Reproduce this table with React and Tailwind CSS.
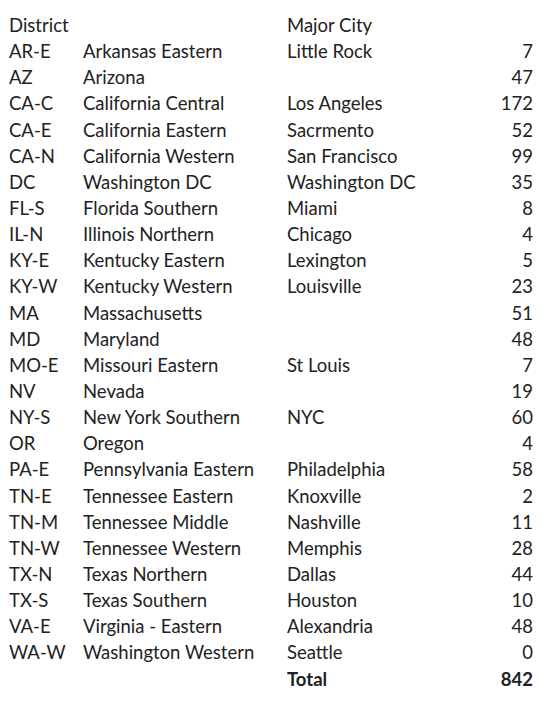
import React from "react";

const rows = [
  ["AR-E", "Arkansas Eastern", "Little Rock", "7"],
  ["AZ", "Arizona", "", "47"],
  ["CA-C", "California Central", "Los Angeles", "172"],
  ["CA-E", "California Eastern", "Sacrmento", "52"],
  ["CA-N", "California Western", "San Francisco", "99"],
  ["DC", "Washington DC", "Washington DC", "35"],
  ["FL-S", "Florida Southern", "Miami", "8"],
  ["IL-N", "Illinois Northern", "Chicago", "4"],
  ["KY-E", "Kentucky Eastern", "Lexington", "5"],
  ["KY-W", "Kentucky Western", "Louisville", "23"],
  ["MA", "Massachusetts", "", "51"],
  ["MD", "Maryland", "", "48"],
  ["MO-E", "Missouri Eastern", "St Louis", "7"],
  ["NV", "Nevada", "", "19"],
  ["NY-S", "New York Southern", "NYC", "60"],
  ["OR", "Oregon", "", "4"],
  ["PA-E", "Pennsylvania Eastern", "Philadelphia", "58"],
  ["TN-E", "Tennessee Eastern", "Knoxville", "2"],
  ["TN-M", "Tennessee Middle", "Nashville", "11"],
  ["TN-W", "Tennessee Western", "Memphis", "28"],
  ["TX-N", "Texas Northern", "Dallas", "44"],
  ["TX-S", "Texas Southern", "Houston", "10"],
  ["VA-E", "Virginia - Eastern", "Alexandria", "48"],
  ["WA-W", "Washington Western", "Seattle", "0"],
];

const Row = ({ cells, bold }) => (
  <div
    className={`grid grid-cols-[74px_204px_1fr_80px] h-[26.15px] items-center whitespace-nowrap ${
      bold ? "font-bold" : ""
    }`}
  >
    <span>{cells[0]}</span>
    <span>{cells[1]}</span>
    <span>{cells[2]}</span>
    <span className="text-right">{cells[3]}</span>
  </div>
);

export default function App() {
  return (
    <div className="w-[550px] h-[702px] bg-white text-[#222] text-[18.5px] font-['Lato',sans-serif] pl-[9px] pr-[17px] pt-[12px]">
      <Row cells={["District", "", "Major City", ""]} />
      {rows.map((r) => (
        <Row key={r[0]} cells={r} />
      ))}
      <Row cells={["", "", "Total", "842"]} bold />
    </div>
  );
}
